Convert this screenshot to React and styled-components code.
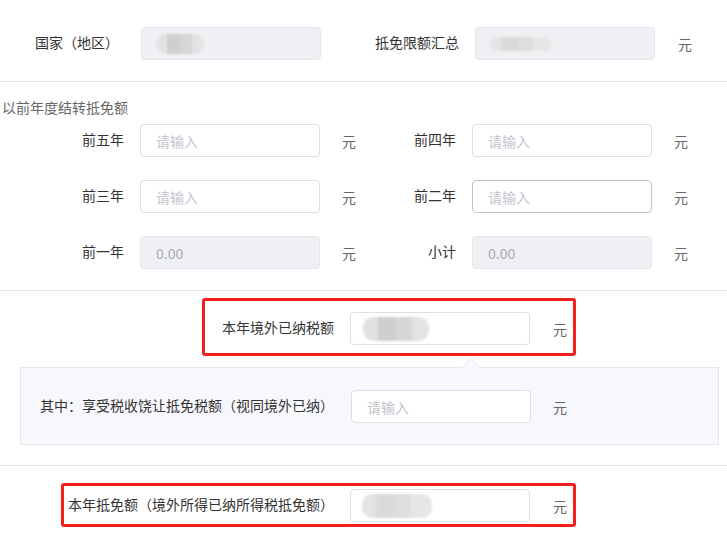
import styled, { createGlobalStyle } from "styled-components";

const GlobalStyle = createGlobalStyle`
  html, body {
    margin: 0;
    padding: 0;
    background: #ffffff;
  }
  body {
    font-family: "Noto Sans CJK SC", "Noto Sans", sans-serif;
    font-size: 14px;
    color: #333333;
  }
`;

function App() {
  return (
    <Page>
      <GlobalStyle />
      <TopSection>
        <Label $w={141} $pr={22}>国家（地区）</Label>
        <MaskedBox $disabled>
          <Blur $w={48} />
        </MaskedBox>
        <Label $w={154} $pr={16}>抵免限额汇总</Label>
        <MaskedBox $disabled>
          <Blur $w={62} $tone="light" $h={14} />
        </MaskedBox>
        <Unit $ml={23}>元</Unit>
      </TopSection>

      <CarrySection>
        <SectionTitle>以前年度结转抵免额</SectionTitle>
        <Grid>
          <Label $w={140} $pr={16}>前五年</Label>
          <TextInput readOnly placeholder="请输入" />
          <Unit $ml={22}>元</Unit>
          <Label $w={116} $pr={16}>前四年</Label>
          <TextInput readOnly placeholder="请输入" />
          <Unit $ml={22}>元</Unit>

          <Label $w={140} $pr={16}>前三年</Label>
          <TextInput readOnly placeholder="请输入" />
          <Unit $ml={22}>元</Unit>
          <Label $w={116} $pr={16}>前二年</Label>
          <TextInput readOnly placeholder="请输入" $hover />
          <Unit $ml={22}>元</Unit>

          <Label $w={140} $pr={16}>前一年</Label>
          <TextInput disabled value="0.00" readOnly />
          <Unit $ml={22}>元</Unit>
          <Label $w={116} $pr={16}>小计</Label>
          <TextInput disabled value="0.00" readOnly />
          <Unit $ml={22}>元</Unit>
        </Grid>
      </CarrySection>

      <PaidSection>
        <Highlight $ml={202} $pl={17} $pt={11} $pb={8}>
          <Label $pr={16}>本年境外已纳税额</Label>
          <MaskedBox>
            <Blur $w={66} $h={24} $ml={-2} />
          </MaskedBox>
          <Unit $ml={23}>元</Unit>
        </Highlight>
        <Popover>
          <Label $pr={17}>其中：享受税收饶让抵免税额（视同境外已纳）</Label>
          <TextInput readOnly placeholder="请输入" />
          <Unit $ml={22}>元</Unit>
        </Popover>
      </PaidSection>

      <CreditSection>
        <Highlight $ml={61} $pl={4} $pt={3} $pb={2}>
          <Label $pr={16}>本年抵免额（境外所得已纳所得税抵免额）</Label>
          <MaskedBox>
            <Blur $w={70} $h={24} $ml={-3} $tone="light" />
          </MaskedBox>
          <Unit $ml={23}>元</Unit>
        </Highlight>
      </CreditSection>
    </Page>
  );
}

export default App;

const Page = styled.div`
  width: 727px;
  height: 538px;
  overflow: hidden;
  background: #ffffff;
`;

const TopSection = styled.div`
  display: flex;
  align-items: center;
  padding: 27px 0 21px;
  border-bottom: 1px solid #e4e7ed;
`;

const CarrySection = styled.div`
  padding: 15px 0 21px;
  border-bottom: 1px solid #e4e7ed;
`;

const SectionTitle = styled.div`
  padding-left: 2px;
  line-height: 20px;
  color: #666666;
  margin-bottom: 7px;
`;

const Grid = styled.div`
  display: grid;
  grid-template-columns: 140px 180px 36px 116px 180px 37px;
  row-gap: 23px;
  align-items: center;
`;

const PaidSection = styled.div`
  padding: 7px 0 20px;
  border-bottom: 1px solid #e4e7ed;
`;

const CreditSection = styled.div`
  padding-top: 17px;
`;

const Label = styled.div`
  box-sizing: border-box;
  ${({ $w }) => ($w ? `width: ${$w}px;` : "")}
  flex-shrink: 0;
  padding-right: ${({ $pr }) => $pr || 0}px;
  padding-bottom: 4px;
  text-align: right;
  white-space: nowrap;
  font-size: 14px;
  line-height: 20px;
  color: #333333;
`;

const Unit = styled.div`
  margin-left: ${({ $ml }) => $ml || 0}px;
  font-size: 14px;
  line-height: 20px;
  color: #666666;
  white-space: nowrap;
`;

const TextInput = styled.input`
  box-sizing: border-box;
  width: 180px;
  height: 33px;
  padding: 0 15px;
  border: 1px solid ${({ $hover }) => ($hover ? "#c0c4cc" : "#dcdfe6")};
  border-radius: 4px;
  background: #ffffff;
  font-family: "Noto Sans CJK SC", "Noto Sans", sans-serif;
  font-size: 14px;
  color: #606266;
  outline: none;

  &::placeholder {
    color: #c0c4cc;
  }

  &:disabled {
    background: #eff0f4;
    border-color: #e4e7ed;
    color: #a8abb2;
    -webkit-text-fill-color: #a8abb2;
    opacity: 1;
  }
`;

const MaskedBox = styled.div`
  box-sizing: border-box;
  flex-shrink: 0;
  width: 180px;
  height: 33px;
  padding: 0 14px;
  display: flex;
  align-items: center;
  border: 1px solid ${({ $disabled }) => ($disabled ? "#e4e7ed" : "#dcdfe6")};
  border-radius: 4px;
  background: ${({ $disabled }) => ($disabled ? "#eff0f4" : "#ffffff")};
`;

const Blur = styled.span`
  display: block;
  width: ${({ $w }) => $w}px;
  height: ${({ $h }) => $h || 20}px;
  margin-left: ${({ $ml }) => $ml || 0}px;
  border-radius: 10px;
  filter: blur(1.2px);
  background: ${({ $tone }) =>
    $tone === "light"
      ? "linear-gradient(90deg, #e4e4e4 0 20%, #d9d9d9 20% 45%, #dedede 45% 70%, #e6e6e6 70%)"
      : "linear-gradient(90deg, #e2e2e2 0 22%, #cfcfcf 22% 48%, #d6d6d6 48% 74%, #e3e3e3 74%)"};
`;

const Highlight = styled.div`
  display: inline-flex;
  align-items: center;
  margin-left: ${({ $ml }) => $ml}px;
  padding: ${({ $pt }) => $pt}px 6px ${({ $pb }) => $pb}px
    ${({ $pl }) => $pl}px;
  border: 3px solid #f5201e;
  border-radius: 3px;
`;

const Popover = styled.div`
  position: relative;
  display: flex;
  align-items: center;
  width: 699px;
  box-sizing: border-box;
  margin: 11px 0 0 20px;
  padding: 22px 0 21px 19px;
  background: #f7f8fc;
  border: 1px solid #e4e7ed;

  &::before,
  &::after {
    content: "";
    position: absolute;
    left: 440px;
    width: 0;
    height: 0;
    border-left: 10px solid transparent;
    border-right: 10px solid transparent;
  }

  &::before {
    top: -10px;
    border-bottom: 10px solid #e4e7ed;
  }

  &::after {
    top: -9px;
    border-bottom: 10px solid #f7f8fc;
  }
`;
